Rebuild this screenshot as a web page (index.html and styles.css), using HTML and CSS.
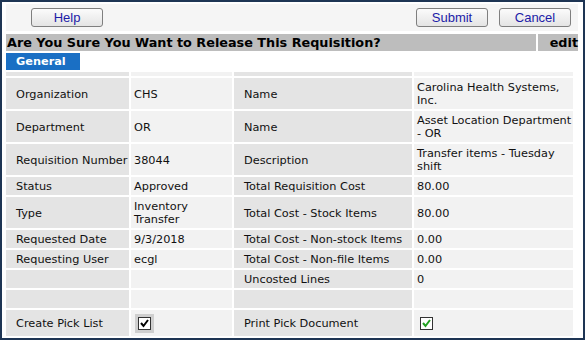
FILE: index.html
```html
<!DOCTYPE html>
<html>
<head>
<meta charset="utf-8">
<link rel="stylesheet" href="styles.css">
</head>
<body>
<div class="frame">
  <div class="toolbar">
    <button class="btn help">Help</button>
    <div class="spacer"></div>
    <button class="btn">Submit</button>
    <button class="btn">Cancel</button>
  </div>
  <div class="titlebar">
    <div class="title">Are You Sure You Want to Release This Requisition?</div>
    <div class="edit">edit</div>
  </div>
  <div class="tabs"><div class="tab">General</div></div>
  <table class="grid">
    <colgroup>
      <col class="c1"><col class="c2"><col class="c3"><col class="c4">
    </colgroup>
    <tr class="r0"><td class="lab"></td><td class="val"></td><td class="lab"></td><td class="val"></td></tr>
    <tr class="tall"><td class="lab">Organization</td><td class="val">CHS</td><td class="lab">Name</td><td class="val">Carolina Health Systems, Inc.</td></tr>
    <tr class="tall"><td class="lab">Department</td><td class="val">OR</td><td class="lab">Name</td><td class="val">Asset Location Department - OR</td></tr>
    <tr class="tall"><td class="lab">Requisition Number</td><td class="val">38044</td><td class="lab">Description</td><td class="val">Transfer items - Tuesday shift</td></tr>
    <tr class="row"><td class="lab">Status</td><td class="val">Approved</td><td class="lab">Total Requisition Cost</td><td class="val">80.00</td></tr>
    <tr class="tall"><td class="lab">Type</td><td class="val">Inventory Transfer</td><td class="lab">Total Cost - Stock Items</td><td class="val">80.00</td></tr>
    <tr class="row"><td class="lab">Requested Date</td><td class="val">9/3/2018</td><td class="lab">Total Cost - Non-stock Items</td><td class="val">0.00</td></tr>
    <tr class="row"><td class="lab">Requesting User</td><td class="val">ecgl</td><td class="lab">Total Cost - Non-file Items</td><td class="val">0.00</td></tr>
    <tr class="row"><td class="lab"></td><td class="val"></td><td class="lab">Uncosted Lines</td><td class="val">0</td></tr>
    <tr class="row"><td class="lab"></td><td class="val"></td><td class="lab"></td><td class="val"></td></tr>
    <tr class="last">
      <td class="lab">Create Pick List</td>
      <td class="val"><span class="chk disabled"><svg width="11" height="11" viewBox="0 0 11 11"><path d="M2 5 L4.5 8 L9 2" fill="none" stroke="#000" stroke-width="2"/></svg></span></td>
      <td class="lab">Print Pick Document</td>
      <td class="val"><span class="chk"><svg width="11" height="11" viewBox="0 0 11 11"><path d="M2 5 L4.5 8 L9 2" fill="none" stroke="#21a121" stroke-width="2"/></svg></span></td>
    </tr>
  </table>
</div>
</body>
</html>
```
FILE: styles.css
```css
html, body {
  margin: 0;
  padding: 0;
  background: #ffffff;
}
.frame {
  width: 585px;
  height: 340px;
  box-sizing: border-box;
  border: 2px solid #1e3554;
  background: #ffffff;
  padding: 2px 5px 0 4px;
  font-family: "DejaVu Sans", Verdana, sans-serif;
  font-size: 11.3px;
  color: #111;
  overflow: hidden;
}
.toolbar {
  display: flex;
  align-items: center;
  height: 27px;
  background: #f5f5f5;
  padding: 0 7px 0 25px;
  gap: 11px;
}
.spacer { flex: 1; }
.btn {
  width: 72px;
  height: 19px;
  padding: 0;
  border: 1px solid #7f7f7f;
  border-radius: 3px;
  background: linear-gradient(#fbfbfb, #e4e4e4);
  color: #1c1ca8;
  font-family: "Liberation Sans", Arial, sans-serif;
  font-size: 13px;
  line-height: 17px;
}
.titlebar {
  display: flex;
  gap: 2px;
  margin-top: 3px;
  height: 17px;
}
.title {
  flex: 1;
  background: #bdbdbd;
  font-weight: bold;
  font-size: 12.8px;
  line-height: 17px;
  padding-left: 1px;
  color: #000;
  white-space: nowrap;
}
.edit {
  width: 40px;
  background: #bdbdbd;
  font-weight: bold;
  font-size: 12.8px;
  line-height: 17px;
  text-align: right;
  color: #000;
}
.tabs {
  height: 19px;
  margin-top: 2px;
}
.tab {
  width: 74px;
  height: 17px;
  background: #1a6fc4;
  color: #fff;
  font-weight: bold;
  font-size: 11.3px;
  line-height: 17px;
  padding-left: 10px;
  box-sizing: border-box;
}
.grid {
  width: 571px;
  border-collapse: separate;
  border-spacing: 2px;
  margin: -2px 0 0 -2px;
  table-layout: fixed;
}
.c1 { width: 123px; }
.c2 { width: 101px; }
.c3 { width: 178px; }
.c4 { width: auto; }
td {
  padding: 3px 0 2px 3px;
  line-height: 13px;
  vertical-align: middle;
}
.lab {
  background: #e4e4e4;
  padding-left: 10px;
  white-space: nowrap;
}
.val {
  background: #f2f2f2;
}
.r0 td { height: 4px; padding: 0; }
.row td { height: 13px; }
.tall td { height: 26px; }
.last td { height: 21px; }
.chk {
  display: inline-block;
  width: 11px;
  height: 11px;
  border: 1px solid #333;
  background: #fff;
  vertical-align: middle;
  margin-left: 3px;
}
.chk svg { display: block; }
.chk.disabled {
  box-shadow: 0 0 0 3px #cfcfcf;
  margin-left: 4px;
}
```
